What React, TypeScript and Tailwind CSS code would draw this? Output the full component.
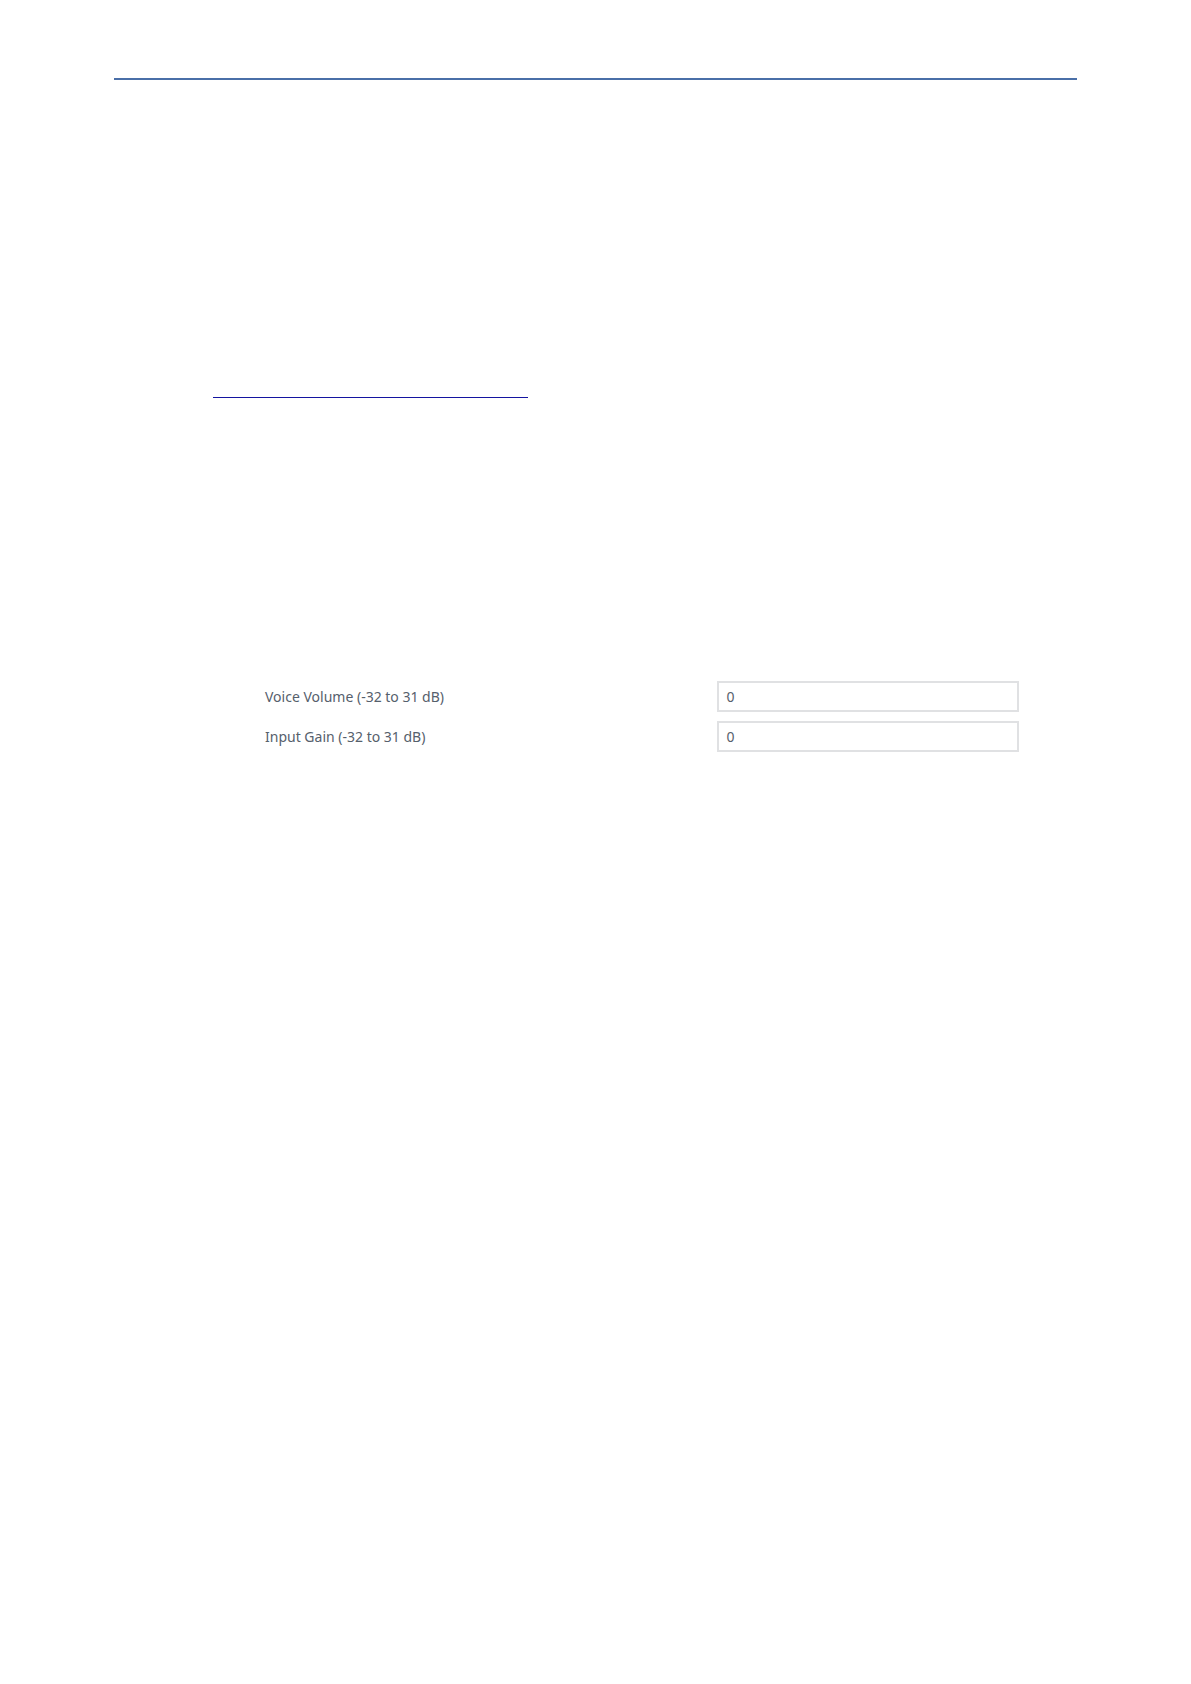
import { useState } from "react";

type GainFieldProps = {
  id: string;
  label: string;
};

function GainField({ id, label }: GainFieldProps) {
  const [value, setValue] = useState("0");
  return (
    <div className="flex items-center">
      <label htmlFor={id} className="w-3/5">
        {label}
      </label>
      <input
        id={id}
        type="text"
        value={value}
        onChange={(event) => setValue(event.target.value)}
        className="h-[31px] w-2/5 border-2 border-[#e0e1e3] bg-white px-[7px] outline-none"
      />
    </div>
  );
}

export default function App() {
  return (
    <main className="min-h-screen bg-white px-[114px] pt-[78px] font-['Noto_Sans','Open_Sans',sans-serif] text-sm text-[#56606c]">
      <hr className="border-t-2 border-[#4a6fa8]" />
      <section className="px-[99px] pt-[317px]">
        <hr className="w-[315px] border-t border-[#1414a0]" />
      </section>
      <form className="flex flex-col gap-[9px] pt-[283px] pr-[58px] pl-[151px]">
        <GainField id="voice-volume" label="Voice Volume (-32 to 31 dB)" />
        <GainField id="input-gain" label="Input Gain (-32 to 31 dB)" />
      </form>
    </main>
  );
}
